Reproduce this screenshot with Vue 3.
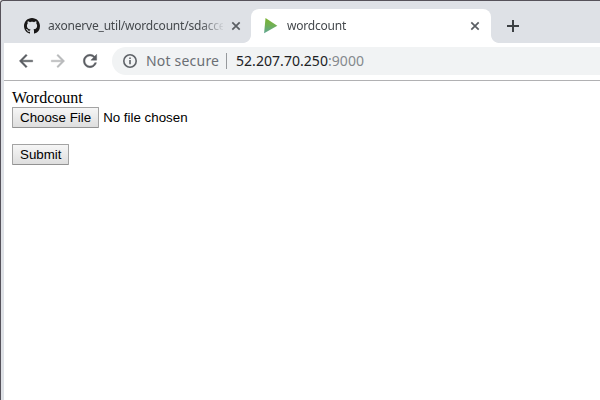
<script setup>
const tabs = [
  { id: 'repo', title: 'axonerve_util/wordcount/sdaccel', icon: 'github', active: false },
  { id: 'app', title: 'wordcount', icon: 'play', active: true },
]
</script>

<template>
  <div class="window">
    <div class="tabstrip">
      <div v-for="tab in tabs" :key="tab.id" class="tab" :class="{ active: tab.active }">
        <svg v-if="tab.icon === 'github'" class="favicon" viewBox="0 0 16 16">
          <path fill="#191717" d="M8 0C3.58 0 0 3.58 0 8c0 3.54 2.29 6.53 5.47 7.59.4.07.55-.17.55-.38 0-.19-.01-.82-.01-1.49-2.01.37-2.53-.49-2.69-.94-.09-.23-.48-.94-.82-1.13-.28-.15-.68-.52-.01-.53.63-.01 1.08.58 1.23.82.72 1.21 1.87.87 2.33.66.07-.52.28-.87.51-1.07-1.78-.2-3.64-.89-3.64-3.95 0-.87.31-1.59.82-2.15-.08-.2-.36-1.02.08-2.12 0 0 .67-.21 2.2.82.64-.18 1.32-.27 2-.27s1.36.09 2 .27c1.53-1.04 2.2-.82 2.2-.82.44 1.1.16 1.92.08 2.12.51.56.82 1.27.82 2.15 0 3.07-1.87 3.75-3.65 3.95.29.25.54.73.54 1.48 0 1.07-.01 1.93-.01 2.2 0 .21.15.46.55.38A8.01 8.01 0 0 0 16 8c0-4.42-3.58-8-8-8z" />
        </svg>
        <svg v-else class="favicon" viewBox="0 0 16 16">
          <defs>
            <linearGradient id="play-fill" x1="0" y1="0" x2="0" y2="1">
              <stop offset="0" stop-color="#7ab32e" />
              <stop offset=".45" stop-color="#72b052" />
              <stop offset="1" stop-color="#5fa693" />
            </linearGradient>
          </defs>
          <path fill="url(#play-fill)" d="M2.5 0 14.3 7.8 1.1 15.2z" />
        </svg>
        <span class="title">{{ tab.title }}</span>
        <svg class="close" viewBox="0 0 10 10"><path d="M1.3 1.3l7.4 7.4M8.7 1.3L1.3 8.7" /></svg>
      </div>
      <svg class="plus" viewBox="0 0 12 12"><path d="M6 0v12M0 6h12" /></svg>
    </div>

    <div class="toolbar">
      <svg class="nav" viewBox="0 0 24 24"><path d="M20 11H7.83l5.59-5.59L12 4l-8 8 8 8 1.41-1.41L7.83 13H20v-2z" /></svg>
      <svg class="nav disabled" viewBox="0 0 24 24"><path d="M12 4l-1.41 1.41L16.17 11H4v2h12.17l-5.58 5.59L12 20l8-8z" /></svg>
      <svg class="nav" viewBox="0 0 24 24"><path d="M17.65 6.35C16.2 4.9 14.21 4 12 4c-4.42 0-7.99 3.58-7.99 8s3.57 8 7.99 8c3.73 0 6.84-2.55 7.73-6h-2.08c-.82 2.33-3.04 4-5.65 4-3.31 0-6-2.69-6-6s2.69-6 6-6c1.66 0 3.14.69 4.22 1.78L13 11h7V4l-2.35 2.35z" /></svg>
      <div class="omnibox">
        <svg class="info" viewBox="0 0 14 14">
          <circle cx="7" cy="7" r="6.2" />
          <path d="M7 6v4.2M7 3.4v1.6" />
        </svg>
        <span class="security">Not secure</span>
        <span class="separator"></span>
        <span class="url">52.207.70.250<span class="port">:9000</span></span>
      </div>
    </div>

    <main class="page">
      <div class="heading">Wordcount</div>
      <div class="file">
        <button class="button choose">Choose File</button>
        <span>No file chosen</span>
      </div>
      <button class="button submit">Submit</button>
    </main>
  </div>
</template>

<style>
body {
  background: #fff;
  overflow: hidden;
}
</style>

<style scoped>
.window {
  box-sizing: border-box;
  width: 600px;
  height: 400px;
  border-top: 1px solid #56525a;
  border-left: 1px solid #56525a;
  border-top-left-radius: 3px;
  padding-left: 3px;
  background: #dee1e6;
  display: flex;
  flex-direction: column;
  font-family: "Noto Sans", sans-serif;
}
.tabstrip {
  height: 42px;
  flex: none;
  box-sizing: border-box;
  padding: 8px 0 0 7px;
  display: flex;
  background: #dee1e6;
}
.tab {
  position: relative;
  box-sizing: border-box;
  width: 240px;
  height: 34px;
  padding: 0 10px 0 13px;
  display: flex;
  align-items: center;
  font-size: 12px;
  letter-spacing: -0.2px;
  color: #45494d;
}
.tab.active {
  padding: 0 11px 0 12px;
  background: #fff;
  border-radius: 8px 8px 0 0;
}
.tab.active::before,
.tab.active::after {
  content: "";
  position: absolute;
  bottom: 0;
  width: 8px;
  height: 8px;
}
.tab.active::before {
  left: -8px;
  background: radial-gradient(circle at 0 0, transparent 7.5px, #fff 8.3px);
}
.tab.active::after {
  right: -8px;
  background: radial-gradient(circle at 100% 0, transparent 7.5px, #fff 8.3px);
}
.favicon {
  width: 16px;
  height: 16px;
  flex: none;
  margin-right: 8px;
}
.title {
  width: 175px;
  flex: none;
  overflow: hidden;
  white-space: nowrap;
  line-height: 18px;
  mask-image: linear-gradient(to right, #000 152px, transparent 177px);
}
.close {
  width: 10px;
  height: 10px;
  flex: none;
  margin-left: auto;
  fill: none;
  stroke: #5a5e63;
  stroke-width: 1.7;
}
.plus {
  width: 12px;
  height: 12px;
  margin: 11px 0 0 16px;
  stroke: #3c4043;
  stroke-width: 2;
}
.toolbar {
  height: 38px;
  flex: none;
  box-sizing: border-box;
  padding: 4px 0 5px 12px;
  display: flex;
  align-items: center;
  background: #fff;
  border-bottom: 1px solid #b1b1b3;
}
.nav {
  width: 20px;
  height: 20px;
  flex: none;
  margin-right: 12px;
  fill: #5a5d62;
  stroke: #5a5d62;
  stroke-width: 0.5;
}
.nav.disabled {
  fill: #b9babc;
  stroke: #b9babc;
}
.omnibox {
  height: 28px;
  flex: 1;
  box-sizing: border-box;
  padding-left: 11px;
  display: flex;
  align-items: center;
  background: #f1f3f4;
  border-radius: 14px 0 0 14px;
  font-size: 14px;
  line-height: 20px;
  white-space: nowrap;
}
.info {
  width: 14px;
  height: 14px;
  margin-right: 9px;
  fill: none;
  stroke: #5f6368;
  stroke-width: 1.6;
}
.security {
  width: 80px;
  letter-spacing: 0.2px;
  color: #6b6f74;
}
.separator {
  width: 1px;
  height: 16px;
  margin-right: 9px;
  background: #96999c;
}
.url {
  letter-spacing: 0.05px;
  color: #202124;
}
.port {
  color: #85898d;
}
.page {
  flex: 1;
  padding: 8px;
  background: #fff;
  color: #000;
  font-family: "Liberation Serif", serif;
  font-size: 16px;
}
.heading {
  line-height: 18px;
}
.file {
  display: flex;
  align-items: center;
  gap: 4px;
  height: 21px;
  font: 13.333px "Liberation Sans", sans-serif;
}
.button {
  display: block;
  box-sizing: border-box;
  height: 21px;
  margin: 0;
  padding: 1px 7px;
  border: 1px solid #a3a3a3;
  border-bottom-color: #929292;
  border-radius: 1px;
  background: linear-gradient(#f6f6f6, #dedede);
  color: #000;
  font: 13.333px "Liberation Sans", sans-serif;
  white-space: nowrap;
}
.submit {
  margin-top: 16px;
}
</style>
